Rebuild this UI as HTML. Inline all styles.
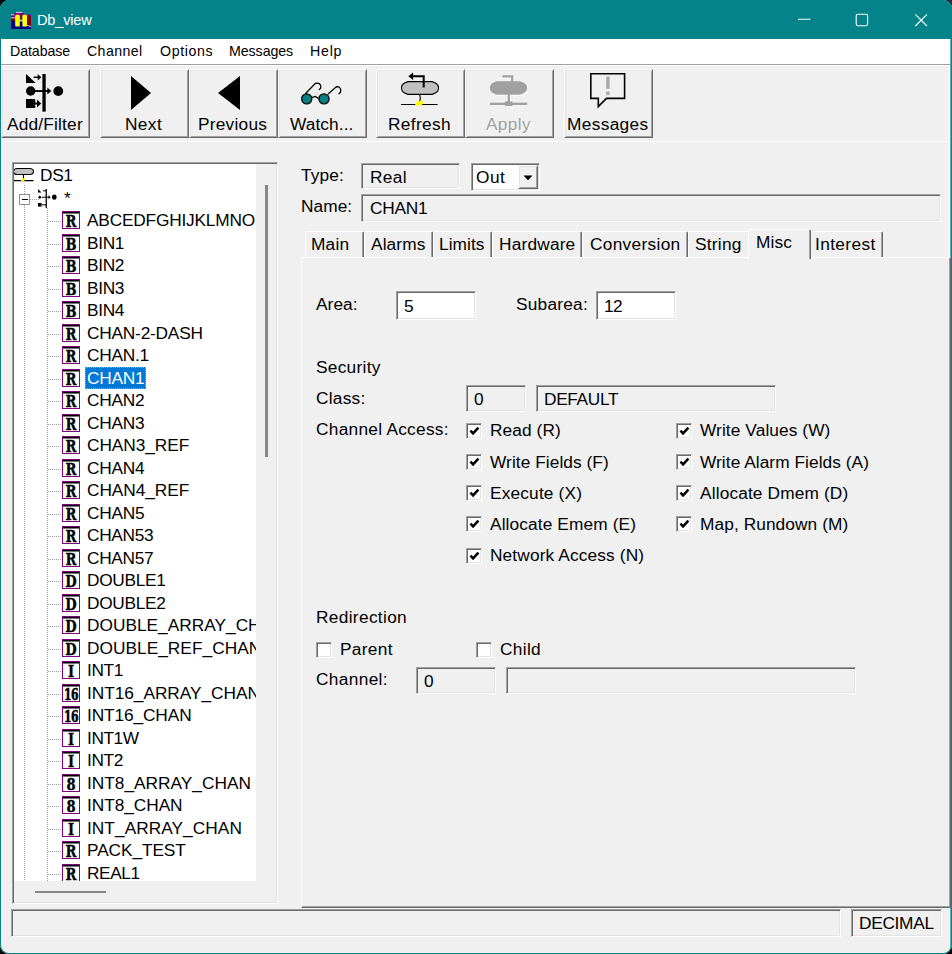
<!DOCTYPE html>
<html><head><meta charset="utf-8"><title>Db_view</title>
<style>
html,body{margin:0;padding:0;background:#000;}
body{width:952px;height:954px;overflow:hidden;position:relative;font-family:"Liberation Sans",sans-serif;}
#win{position:absolute;left:0;top:0;width:952px;height:954px;box-sizing:border-box;background:#f0f0f0;border-radius:9px;overflow:hidden;}
#frame{position:absolute;left:0;top:0;width:952px;height:954px;box-sizing:border-box;border:1px solid #04838a;border-top:none;border-radius:9px;pointer-events:none;}
#win div,#win svg,#win span,.abs{position:absolute;}
.t{white-space:pre;color:#000;}
.sunk{box-sizing:border-box;border:1px solid;border-color:#a0a0a0 #fff #fff #a0a0a0;box-shadow:inset 1px 1px 0 #696969,inset -1px -1px 0 #e3e3e3;}
.btn{box-sizing:border-box;border:1px solid;border-color:#fff #696969 #696969 #fff;box-shadow:inset 1px 1px 0 #e3e3e3,inset -1px -1px 0 #a0a0a0;background:#f0f0f0;}
.vdot{background:repeating-linear-gradient(to bottom,#a0a0a0 0 1px,transparent 1px 2px);}
.hdot{background:repeating-linear-gradient(to right,#a0a0a0 0 1px,transparent 1px 2px);}
.ticon{box-sizing:border-box;width:18px;height:18px;border:1px solid #800080;background:#fff;color:#000;box-shadow:inset 0 1px 0 #000,inset 0 2px 0 #777;overflow:hidden;}
#win .ticon b{position:absolute;display:block;left:-7px;width:30px;top:2px;height:16px;line-height:16px;text-align:center;-webkit-text-stroke:0.35px #000;font-family:"DejaVu Serif","Liberation Serif",serif;font-weight:bold;}
.tabpage{box-sizing:border-box;border:1px solid;border-color:#fff #696969 #696969 #fff;box-shadow:inset -1px -1px 0 #a0a0a0;}
.tab{box-sizing:border-box;border:1px solid;border-color:#fff #696969 transparent #fff;box-shadow:inset -1px 0 0 #a0a0a0;border-radius:2px 2px 0 0;border-bottom:none;}
.tab.sel{background:#f0f0f0;}
</style></head><body>
<div class="abs" style="right:0;top:0;width:12px;height:12px;background:#2a2a3c"></div>
<div id="win">
<div class="abs" style="left:0;top:0;width:952px;height:39px;background:#04838a"></div>
<svg class="abs" style="left:11px;top:9px" width="20" height="20" viewBox="0 0 20 20">
<rect x="0" y="0" width="20" height="20" fill="#008080"/>
<rect x="0" y="11.3" width="20" height="8.7" fill="#000080"/>
<rect x="0" y="8.7" width="5" height="3.4" fill="#800000"/><rect x="16.2" y="7.2" width="3.8" height="9.4" fill="#800000"/>
<path d="M16.2 16.4 L20 17.6" stroke="#fff" stroke-width="0.8"/>
<path d="M0 5.6 H3.2 L5 3.3 H11.4 L13.6 5.6 H20 V7.3 H16.2 V8.7 H0 Z" fill="#800080"/>
<path d="M5 3.4 H11.4 M0 5.8 H3 M0 8.9 H4.4" stroke="#fff" stroke-width="0.8"/>
<rect x="8.6" y="9.2" width="3" height="1.4" fill="#800000"/><rect x="8.6" y="10.8" width="3" height="1" fill="#fff"/><rect x="8.6" y="11.9" width="3" height="0.9" fill="#30b040"/>
<rect x="4.2" y="5.8" width="4.6" height="11.8" rx="1.2" fill="#ffff00"/><rect x="11.4" y="5.8" width="4.6" height="11.8" rx="1.2" fill="#ffff00"/>
</svg>
<span class="t" style="left:37.00px;top:12px;font-size:14.6px;line-height:16px;letter-spacing:-0.200px;color:#fff;">Db_view</span>
<svg class="abs" style="left:780px;top:0" width="172" height="39" viewBox="0 0 172 39" fill="none" stroke="#fff" stroke-width="1.1">
<path d="M18 19.3 H30.5"/>
<rect x="76.2" y="14.3" width="11.4" height="11.4" rx="1.6"/>
<path d="M135.3 14.3 L147 26 M147 14.3 L135.3 26"/>
</svg>
<div class="" style="left:1px;top:39px;width:950px;height:25px;background:#fff;"></div>
<div class="" style="left:1px;top:64px;width:950px;height:1px;background:#a0a0a0;"></div>
<div class="" style="left:1px;top:65px;width:950px;height:1px;background:#fff;"></div>
<span class="t" style="left:10.00px;top:43px;font-size:14.2px;line-height:16px;letter-spacing:-0.073px;color:#000;">Database</span>
<span class="t" style="left:87.00px;top:43px;font-size:14.2px;line-height:16px;letter-spacing:0.372px;color:#000;">Channel</span>
<span class="t" style="left:160.00px;top:43px;font-size:14.2px;line-height:16px;letter-spacing:0.609px;color:#000;">Options</span>
<span class="t" style="left:229.00px;top:43px;font-size:14.2px;line-height:16px;letter-spacing:-0.065px;color:#000;">Messages</span>
<span class="t" style="left:310.00px;top:43px;font-size:14.2px;line-height:16px;letter-spacing:0.749px;color:#000;">Help</span>
<div class="" style="left:1px;top:141px;width:950px;height:1px;background:#fff;"></div>
<div class="" style="left:1px;top:66px;width:1px;height:887px;background:#fff;"></div>
<div class="" style="left:948px;top:66px;width:2px;height:191px;background:#f8f8f8;"></div>
<div class="" style="left:950px;top:39px;width:1px;height:914px;background:#5fb0b4;"></div>
<div class="btn" style="left:1px;top:69px;width:89px;height:69px;"></div>
<svg class="abs" style="left:26px;top:74px;overflow:visible" width="38" height="37" viewBox="0 0 38 37"><g fill="#000" stroke="none"><path d="M0 0 L0 9 L9.7 9 Z"/><path d="M7.7 2.5 h4 v-2.6 l3.6 3.3 l-3.6 3.3 v-2.6 h-4 z"/>
<rect x="16.4" y="0" width="3.3" height="37.6"/><circle cx="4.7" cy="17" r="4.7"/><rect x="8" y="16.1" width="14" height="1.9"/><path d="M21.3 13.6 l4 3.4 l-4 3.4 z"/>
<circle cx="32.3" cy="17.1" r="4.9"/><rect x="0" y="25" width="9.2" height="9"/><path d="M9 28.6 h2 v-3.2 l4.2 4.1 l-4.2 4.1 v-3.2 h-2 z"/></g></svg>
<span class="t" style="left:7.00px;top:114px;font-size:17.3px;line-height:20px;letter-spacing:0.191px;color:#000;">Add/Filter</span>
<div class="btn" style="left:100px;top:69px;width:89px;height:69px;"></div>
<svg class="abs" style="left:131px;top:76px;overflow:visible" width="20" height="34" viewBox="0 0 20 34"><path d="M0 0 L20 17 L0 34 Z" fill="#000"/></svg>
<span class="t" style="left:125.00px;top:114px;font-size:17.3px;line-height:20px;letter-spacing:0.388px;color:#000;">Next</span>
<div class="btn" style="left:189px;top:69px;width:89px;height:69px;"></div>
<svg class="abs" style="left:218px;top:76px;overflow:visible" width="22" height="34" viewBox="0 0 22 34"><path d="M22 0 L0 17 L22 34 Z" fill="#000"/></svg>
<span class="t" style="left:198.00px;top:114px;font-size:17.3px;line-height:20px;letter-spacing:0.235px;color:#000;">Previous</span>
<div class="btn" style="left:278px;top:69px;width:89px;height:69px;"></div>
<svg class="abs" style="left:301px;top:82px;overflow:visible" width="41" height="24" viewBox="0 0 41 24"><g fill="none" stroke="#000" stroke-width="1.3" stroke-linecap="round"><path d="M4.8 11.2 L14.2 1.5 Q19.3 0.3 19.8 4.3 Q20 6.8 18.2 7.5"/><path d="M27.4 11.8 L35 5 Q39.3 3.8 39.8 8.3 Q39.9 10.8 38.1 11.7"/><path d="M10.8 15.6 L14.2 14.4 L17.6 16.4"/></g>
<circle cx="5.7" cy="16.9" r="5.1" fill="#008080" stroke="#000" stroke-width="1.2"/><circle cx="23" cy="16.9" r="5.1" fill="#008080" stroke="#000" stroke-width="1.2"/></svg>
<span class="t" style="left:290.00px;top:114px;font-size:17.3px;line-height:20px;letter-spacing:0.085px;color:#000;">Watch...</span>
<div class="btn" style="left:376px;top:69px;width:89px;height:69px;"></div>
<svg class="abs" style="left:401px;top:73px;overflow:visible" width="38" height="33" viewBox="0 0 38 33"><path d="M7 8.6 H31 Q37.6 10.5 37.6 15 Q37.6 19.5 31 21.4 H7 Q0.4 19.5 0.4 15 Q0.4 10.5 7 8.6 Z" fill="#c0c0c0" stroke="#000" stroke-width="1.1"/>
<path d="M22.7 14.4 V3.3 H11.5" fill="none" stroke="#000" stroke-width="2"/><path d="M7.3 3.3 l4.8 -3.7 v7.4 z" fill="#000"/>
<path d="M18.5 21.6 Q20.2 25 18.6 28.5" fill="none" stroke="#000" stroke-width="1.1"/><path d="M0 31.5 H36.5" stroke="#000" stroke-width="1.2"/><path d="M13.8 32.6 l2.2 -4.6 h6.8 l-2.2 4.6 z" fill="#ffff00"/></svg>
<span class="t" style="left:388.00px;top:114px;font-size:17.3px;line-height:20px;letter-spacing:0.346px;color:#000;">Refresh</span>
<div class="btn" style="left:465px;top:69px;width:89px;height:69px;"></div>
<svg class="abs" style="left:490px;top:75px;overflow:visible" width="38" height="32" viewBox="0 0 38 32"><g fill="#fff" stroke="#fff" transform="translate(1,1)"><path d="M6.5 6.3 H30 Q37.3 8.5 37.3 13 Q37.3 17.5 30 19.8 H6.5 Q-0.2 17.5 -0.2 13 Q-0.2 8.5 6.5 6.3 Z" stroke="none"/>
<path d="M12.4 1.3 H22.3 V7" fill="none" stroke-width="2.3"/><rect x="17.7" y="19.5" width="2.3" height="8" stroke="none"/><rect x="0" y="27.7" width="37.3" height="2.4" stroke="none"/><rect x="14.9" y="26.4" width="7.6" height="4.7" stroke="none"/></g><g fill="#a0a0a0" stroke="#a0a0a0"><path d="M6.5 6.3 H30 Q37.3 8.5 37.3 13 Q37.3 17.5 30 19.8 H6.5 Q-0.2 17.5 -0.2 13 Q-0.2 8.5 6.5 6.3 Z" stroke="none"/>
<path d="M12.4 1.3 H22.3 V7" fill="none" stroke-width="2.3"/><rect x="17.7" y="19.5" width="2.3" height="8" stroke="none"/><rect x="0" y="27.7" width="37.3" height="2.4" stroke="none"/><rect x="14.9" y="26.4" width="7.6" height="4.7" stroke="none"/></g></svg>
<span class="t" style="left:486.00px;top:114px;font-size:17.3px;line-height:20px;letter-spacing:0.345px;color:#a0a0a0;text-shadow:1px 1px 0 #fff;">Apply</span>
<div class="btn" style="left:564px;top:69px;width:89px;height:69px;"></div>
<svg class="abs" style="left:590px;top:73px;overflow:visible" width="36" height="35" viewBox="0 0 36 35"><path d="M0.8 0.8 H34.6 V25.4 H16.5 L8.3 33.5 V25.4 H0.8 Z" fill="none" stroke="#000" stroke-width="1.6"/>
<rect x="16.2" y="3.6" width="3.4" height="12.2" fill="#a8a8a8"/><rect x="16.2" y="18.6" width="3.4" height="3.5" fill="#a8a8a8"/></svg>
<span class="t" style="left:567.00px;top:114px;font-size:17.3px;line-height:20px;letter-spacing:0.339px;color:#000;">Messages</span>
<div class="sunk" style="left:12px;top:162px;width:266px;height:742px;background:#f0f0f0;"></div>
<div class="" style="left:14px;top:164px;width:242px;height:717px;background:#fff;"></div>
<div class="" style="left:265px;top:185px;width:2.5px;height:272px;background:#868686;"></div>
<div class="" style="left:35px;top:890.5px;width:70.5px;height:2.0px;background:#868686;"></div>
<div class="abs" style="left:14px;top:164px;width:242px;height:717px;overflow:hidden">
<div class="vdot" style="left:10px;top:21px;width:1px;height:696px;"></div>
<div class="vdot" style="left:33px;top:44px;width:1px;height:673px;"></div>
<div class="hdot" style="left:16px;top:35px;width:9px;height:1px;"></div>
<svg class="abs" style="left:-1px;top:3px;overflow:visible" width="22" height="16" viewBox="0 0 22 16">
<path d="M4.5 1.5 H16.5 Q20.5 1.5 20.5 4.5 Q20.5 7.5 16.5 7.5 H4.5 Q0.5 7.5 0.5 4.5 Q0.5 1.5 4.5 1.5 Z" fill="#c0c0c0" stroke="#000" stroke-width="1.1"/>
<path d="M10.5 8 V13" stroke="#000" stroke-width="1.1"/><path d="M0 13.6 H20.5" stroke="#000" stroke-width="1.2"/><path d="M7.5 14.3 l1.5 -3 h3.5 l-1.5 3 z" fill="#ffff00"/></svg>
<span class="t" style="left:26.00px;top:1px;font-size:17.3px;line-height:20px;letter-spacing:-0.343px;">DS1</span>
<div class="" style="left:5px;top:30px;width:11px;height:11px;background:#fff;border:1px solid #919191;box-sizing:border-box;"></div>
<div class="" style="left:7.5px;top:35px;width:6.0px;height:1.1999999999999886px;background:#000;"></div>
<svg class="abs" style="left:24px;top:25px;overflow:visible" width="20" height="20" viewBox="0 0 20 20" fill="#000">
<path d="M0 0 L0 3.5 L3.5 3.5 Z"/><rect x="5" y="1.3" width="3" height="1"/>
<rect x="7.6" y="0" width="1.3" height="19"/>
<path d="M0 8.2 l1.8 -1.8 l1.8 1.8 l-1.8 1.8 z"/><rect x="4" y="7.7" width="8" height="1"/><path d="M10.5 6.3 l2.2 1.9 l-2.2 1.9 z"/>
<ellipse cx="16.3" cy="8.2" rx="2.3" ry="2.6"/>
<rect x="0" y="14" width="3.6" height="3.6"/><rect x="4" y="15.3" width="4" height="1"/></svg>
<span class="t" style="left:50.00px;top:24px;font-size:17.3px;line-height:20px;letter-spacing:0.018px;">*</span>
<div class="hdot" style="left:34px;top:57px;width:13px;height:1px;"></div>
<div class="ticon" style="left:48px;top:47px;"><b style="font-size:16px;transform:scaleX(0.82);">R</b></div>
<span class="t" style="left:73.00px;top:46px;font-size:17.3px;line-height:20px;letter-spacing:-0.194px;">ABCEDFGHIJKLMNO</span>
<div class="hdot" style="left:34px;top:80px;width:13px;height:1px;"></div>
<div class="ticon" style="left:48px;top:70px;"><b style="font-size:16px;transform:scaleX(0.82);">B</b></div>
<span class="t" style="left:73.00px;top:69px;font-size:17.3px;line-height:20px;letter-spacing:-0.334px;">BIN1</span>
<div class="hdot" style="left:34px;top:102px;width:13px;height:1px;"></div>
<div class="ticon" style="left:48px;top:92px;"><b style="font-size:16px;transform:scaleX(0.82);">B</b></div>
<span class="t" style="left:73.00px;top:91px;font-size:17.3px;line-height:20px;letter-spacing:-0.334px;">BIN2</span>
<div class="hdot" style="left:34px;top:125px;width:13px;height:1px;"></div>
<div class="ticon" style="left:48px;top:115px;"><b style="font-size:16px;transform:scaleX(0.82);">B</b></div>
<span class="t" style="left:73.00px;top:114px;font-size:17.3px;line-height:20px;letter-spacing:-0.334px;">BIN3</span>
<div class="hdot" style="left:34px;top:147px;width:13px;height:1px;"></div>
<div class="ticon" style="left:48px;top:137px;"><b style="font-size:16px;transform:scaleX(0.82);">B</b></div>
<span class="t" style="left:73.00px;top:136px;font-size:17.3px;line-height:20px;letter-spacing:-0.334px;">BIN4</span>
<div class="hdot" style="left:34px;top:170px;width:13px;height:1px;"></div>
<div class="ticon" style="left:48px;top:160px;"><b style="font-size:16px;transform:scaleX(0.82);">R</b></div>
<span class="t" style="left:73.00px;top:159px;font-size:17.3px;line-height:20px;letter-spacing:-0.214px;">CHAN-2-DASH</span>
<div class="hdot" style="left:34px;top:192px;width:13px;height:1px;"></div>
<div class="ticon" style="left:48px;top:182px;"><b style="font-size:16px;transform:scaleX(0.82);">R</b></div>
<span class="t" style="left:73.00px;top:181px;font-size:17.3px;line-height:20px;letter-spacing:-0.262px;">CHAN.1</span>
<div class="hdot" style="left:34px;top:215px;width:13px;height:1px;"></div>
<div class="ticon" style="left:48px;top:205px;"><b style="font-size:16px;transform:scaleX(0.82);">R</b></div>
<div class="" style="left:71px;top:203px;width:61px;height:22px;background:#0078d7;outline:1px dotted #e8a040;outline-offset:-1px;"></div>
<span class="t" style="left:73.00px;top:204px;font-size:17.3px;line-height:20px;letter-spacing:-0.253px;color:#fff;">CHAN1</span>
<div class="hdot" style="left:34px;top:237px;width:13px;height:1px;"></div>
<div class="ticon" style="left:48px;top:227px;"><b style="font-size:16px;transform:scaleX(0.82);">R</b></div>
<span class="t" style="left:73.00px;top:226px;font-size:17.3px;line-height:20px;letter-spacing:-0.253px;">CHAN2</span>
<div class="hdot" style="left:34px;top:260px;width:13px;height:1px;"></div>
<div class="ticon" style="left:48px;top:250px;"><b style="font-size:16px;transform:scaleX(0.82);">R</b></div>
<span class="t" style="left:73.00px;top:249px;font-size:17.3px;line-height:20px;letter-spacing:-0.253px;">CHAN3</span>
<div class="hdot" style="left:34px;top:282px;width:13px;height:1px;"></div>
<div class="ticon" style="left:48px;top:272px;"><b style="font-size:16px;transform:scaleX(0.82);">R</b></div>
<span class="t" style="left:73.00px;top:271px;font-size:17.3px;line-height:20px;letter-spacing:-0.054px;">CHAN3_REF</span>
<div class="hdot" style="left:34px;top:305px;width:13px;height:1px;"></div>
<div class="ticon" style="left:48px;top:295px;"><b style="font-size:16px;transform:scaleX(0.82);">R</b></div>
<span class="t" style="left:73.00px;top:294px;font-size:17.3px;line-height:20px;letter-spacing:-0.253px;">CHAN4</span>
<div class="hdot" style="left:34px;top:327px;width:13px;height:1px;"></div>
<div class="ticon" style="left:48px;top:317px;"><b style="font-size:16px;transform:scaleX(0.82);">R</b></div>
<span class="t" style="left:73.00px;top:316px;font-size:17.3px;line-height:20px;letter-spacing:-0.054px;">CHAN4_REF</span>
<div class="hdot" style="left:34px;top:350px;width:13px;height:1px;"></div>
<div class="ticon" style="left:48px;top:340px;"><b style="font-size:16px;transform:scaleX(0.82);">R</b></div>
<span class="t" style="left:73.00px;top:339px;font-size:17.3px;line-height:20px;letter-spacing:-0.253px;">CHAN5</span>
<div class="hdot" style="left:34px;top:372px;width:13px;height:1px;"></div>
<div class="ticon" style="left:48px;top:362px;"><b style="font-size:16px;transform:scaleX(0.82);">R</b></div>
<span class="t" style="left:73.00px;top:361px;font-size:17.3px;line-height:20px;letter-spacing:-0.315px;">CHAN53</span>
<div class="hdot" style="left:34px;top:395px;width:13px;height:1px;"></div>
<div class="ticon" style="left:48px;top:385px;"><b style="font-size:16px;transform:scaleX(0.82);">R</b></div>
<span class="t" style="left:73.00px;top:384px;font-size:17.3px;line-height:20px;letter-spacing:-0.315px;">CHAN57</span>
<div class="hdot" style="left:34px;top:417px;width:13px;height:1px;"></div>
<div class="ticon" style="left:48px;top:407px;"><b style="font-size:16px;transform:scaleX(0.82);">D</b></div>
<span class="t" style="left:73.00px;top:406px;font-size:17.3px;line-height:20px;letter-spacing:-0.288px;">DOUBLE1</span>
<div class="hdot" style="left:34px;top:440px;width:13px;height:1px;"></div>
<div class="ticon" style="left:48px;top:430px;"><b style="font-size:16px;transform:scaleX(0.82);">D</b></div>
<span class="t" style="left:73.00px;top:429px;font-size:17.3px;line-height:20px;letter-spacing:-0.288px;">DOUBLE2</span>
<div class="hdot" style="left:34px;top:462px;width:13px;height:1px;"></div>
<div class="ticon" style="left:48px;top:452px;"><b style="font-size:16px;transform:scaleX(0.82);">D</b></div>
<span class="t" style="left:73.00px;top:451px;font-size:17.3px;line-height:20px;letter-spacing:0.007px;">DOUBLE_ARRAY_CHAN</span>
<div class="hdot" style="left:34px;top:485px;width:13px;height:1px;"></div>
<div class="ticon" style="left:48px;top:475px;"><b style="font-size:16px;transform:scaleX(0.82);">D</b></div>
<span class="t" style="left:73.00px;top:474px;font-size:17.3px;line-height:20px;letter-spacing:0.025px;">DOUBLE_REF_CHAN</span>
<div class="hdot" style="left:34px;top:507px;width:13px;height:1px;"></div>
<div class="ticon" style="left:48px;top:497px;"><b style="font-size:16px;transform:scaleX(0.82);">I</b></div>
<span class="t" style="left:73.00px;top:496px;font-size:17.3px;line-height:20px;letter-spacing:-0.372px;">INT1</span>
<div class="hdot" style="left:34px;top:530px;width:13px;height:1px;"></div>
<div class="ticon" style="left:48px;top:520px;"><b style="font-size:16px;transform:scaleX(0.68);letter-spacing:-0.8px;-webkit-text-stroke:0.6px #000;">16</b></div>
<span class="t" style="left:73.00px;top:519px;font-size:17.3px;line-height:20px;letter-spacing:-0.038px;">INT16_ARRAY_CHAN</span>
<div class="hdot" style="left:34px;top:552px;width:13px;height:1px;"></div>
<div class="ticon" style="left:48px;top:542px;"><b style="font-size:16px;transform:scaleX(0.68);letter-spacing:-0.8px;-webkit-text-stroke:0.6px #000;">16</b></div>
<span class="t" style="left:73.00px;top:541px;font-size:17.3px;line-height:20px;letter-spacing:-0.113px;">INT16_CHAN</span>
<div class="hdot" style="left:34px;top:575px;width:13px;height:1px;"></div>
<div class="ticon" style="left:48px;top:565px;"><b style="font-size:16px;transform:scaleX(0.82);">I</b></div>
<span class="t" style="left:73.00px;top:564px;font-size:17.3px;line-height:20px;letter-spacing:-0.414px;">INT1W</span>
<div class="hdot" style="left:34px;top:597px;width:13px;height:1px;"></div>
<div class="ticon" style="left:48px;top:587px;"><b style="font-size:16px;transform:scaleX(0.82);">I</b></div>
<span class="t" style="left:73.00px;top:586px;font-size:17.3px;line-height:20px;letter-spacing:-0.372px;">INT2</span>
<div class="hdot" style="left:34px;top:620px;width:13px;height:1px;"></div>
<div class="ticon" style="left:48px;top:610px;"><b style="font-size:16px;transform:scaleX(0.82);">8</b></div>
<span class="t" style="left:73.00px;top:609px;font-size:17.3px;line-height:20px;letter-spacing:0.001px;">INT8_ARRAY_CHAN</span>
<div class="hdot" style="left:34px;top:642px;width:13px;height:1px;"></div>
<div class="ticon" style="left:48px;top:632px;"><b style="font-size:16px;transform:scaleX(0.82);">8</b></div>
<span class="t" style="left:73.00px;top:631px;font-size:17.3px;line-height:20px;letter-spacing:-0.056px;">INT8_CHAN</span>
<div class="hdot" style="left:34px;top:665px;width:13px;height:1px;"></div>
<div class="ticon" style="left:48px;top:655px;"><b style="font-size:16px;transform:scaleX(0.82);">I</b></div>
<span class="t" style="left:73.00px;top:654px;font-size:17.3px;line-height:20px;letter-spacing:0.046px;">INT_ARRAY_CHAN</span>
<div class="hdot" style="left:34px;top:687px;width:13px;height:1px;"></div>
<div class="ticon" style="left:48px;top:677px;"><b style="font-size:16px;transform:scaleX(0.82);">R</b></div>
<span class="t" style="left:73.00px;top:676px;font-size:17.3px;line-height:20px;letter-spacing:-0.091px;">PACK_TEST</span>
<div class="hdot" style="left:34px;top:710px;width:13px;height:1px;"></div>
<div class="ticon" style="left:48px;top:700px;"><b style="font-size:16px;transform:scaleX(0.82);">R</b></div>
<span class="t" style="left:73.00px;top:699px;font-size:17.3px;line-height:20px;letter-spacing:-0.388px;">REAL1</span>
</div>
<span class="t" style="left:301.00px;top:165px;font-size:17.3px;line-height:20px;letter-spacing:0.122px;">Type:</span>
<div class="sunk" style="left:361px;top:163px;width:99px;height:26px;background:#f0f0f0;"></div>
<span class="t" style="left:370.00px;top:167px;font-size:17.3px;line-height:20px;letter-spacing:0.386px;">Real</span>
<div class="sunk" style="left:471px;top:163px;width:69px;height:28px;background:#fff;"></div>
<span class="t" style="left:476.00px;top:167px;font-size:17.3px;line-height:20px;letter-spacing:0.455px;">Out</span>
<div class="btn" style="left:518px;top:165px;width:20px;height:24px;"></div>
<svg class="abs" style="left:523px;top:175px" width="10" height="6" viewBox="0 0 10 6"><path d="M0.5 0.5 H9.5 L5 5.3 Z" fill="#000"/></svg>
<span class="t" style="left:301.00px;top:196px;font-size:17.3px;line-height:20px;letter-spacing:0.047px;">Name:</span>
<div class="sunk" style="left:361px;top:194px;width:580px;height:28px;background:#f0f0f0;"></div>
<span class="t" style="left:370.00px;top:198px;font-size:17.3px;line-height:20px;letter-spacing:-0.253px;">CHAN1</span>
<div class="tabpage" style="left:301px;top:257px;width:650px;height:651px;"></div>
<div class="tab" style="left:305px;top:231px;width:59px;height:26px;"></div>
<span class="t" style="left:311.00px;top:234px;font-size:17.3px;line-height:20px;letter-spacing:0.188px;">Main</span>
<div class="tab" style="left:364px;top:231px;width:69px;height:26px;"></div>
<span class="t" style="left:371.00px;top:234px;font-size:17.3px;line-height:20px;letter-spacing:0.123px;">Alarms</span>
<div class="tab" style="left:433px;top:231px;width:59px;height:26px;"></div>
<span class="t" style="left:439.00px;top:234px;font-size:17.3px;line-height:20px;letter-spacing:0.064px;">Limits</span>
<div class="tab" style="left:492px;top:231px;width:90px;height:26px;"></div>
<span class="t" style="left:499.00px;top:234px;font-size:17.3px;line-height:20px;letter-spacing:0.188px;">Hardware</span>
<div class="tab" style="left:582px;top:231px;width:106px;height:26px;"></div>
<span class="t" style="left:590.00px;top:234px;font-size:17.3px;line-height:20px;letter-spacing:0.306px;">Conversion</span>
<div class="tab" style="left:688px;top:231px;width:62px;height:26px;"></div>
<span class="t" style="left:695.00px;top:234px;font-size:17.3px;line-height:20px;letter-spacing:0.249px;">String</span>
<div class="tab" style="left:810px;top:231px;width:73px;height:26px;"></div>
<span class="t" style="left:815.00px;top:234px;font-size:17.3px;line-height:20px;letter-spacing:0.382px;">Interest</span>
<div class="tab sel" style="left:748px;top:229px;width:63px;height:30px;"></div>
<span class="t" style="left:756.00px;top:232px;font-size:17.3px;line-height:20px;letter-spacing:0.111px;">Misc</span>
<span class="t" style="left:316.00px;top:294px;font-size:17.3px;line-height:20px;letter-spacing:0.055px;">Area:</span>
<div class="sunk" style="left:396px;top:291px;width:80px;height:29px;background:#fff;"></div>
<span class="t" style="left:404.00px;top:296px;font-size:17.3px;line-height:20px;letter-spacing:-0.621px;">5</span>
<span class="t" style="left:516.00px;top:294px;font-size:17.3px;line-height:20px;letter-spacing:0.223px;">Subarea:</span>
<div class="sunk" style="left:596px;top:291px;width:80px;height:29px;background:#fff;"></div>
<span class="t" style="left:604.00px;top:296px;font-size:17.3px;line-height:20px;letter-spacing:-0.621px;">12</span>
<span class="t" style="left:316.00px;top:357px;font-size:17.3px;line-height:20px;letter-spacing:0.274px;">Security</span>
<span class="t" style="left:316.00px;top:388px;font-size:17.3px;line-height:20px;letter-spacing:0.239px;">Class:</span>
<div class="sunk" style="left:466px;top:385px;width:60px;height:27px;background:#f0f0f0;"></div>
<span class="t" style="left:474.00px;top:389px;font-size:17.3px;line-height:20px;letter-spacing:-0.621px;">0</span>
<div class="sunk" style="left:536px;top:385px;width:240px;height:27px;background:#f0f0f0;"></div>
<span class="t" style="left:544.00px;top:389px;font-size:17.3px;line-height:20px;letter-spacing:-0.332px;">DEFAULT</span>
<span class="t" style="left:316.00px;top:419px;font-size:17.3px;line-height:20px;letter-spacing:0.270px;">Channel Access:</span>
<div class="sunk" style="left:466px;top:423px;width:16px;height:16px;background:#fff;"></div>
<svg class="abs" style="left:469px;top:426px" width="11" height="10" viewBox="0 0 11 10"><path d="M1.4 4.6 L4.1 7.4 L9.4 1.6" fill="none" stroke="#000" stroke-width="2.5"/></svg>
<span class="t" style="left:490.00px;top:420px;font-size:17.3px;line-height:20px;letter-spacing:0.087px;">Read (R)</span>
<div class="sunk" style="left:466px;top:454px;width:16px;height:16px;background:#fff;"></div>
<svg class="abs" style="left:469px;top:457px" width="11" height="10" viewBox="0 0 11 10"><path d="M1.4 4.6 L4.1 7.4 L9.4 1.6" fill="none" stroke="#000" stroke-width="2.5"/></svg>
<span class="t" style="left:490.00px;top:452px;font-size:17.3px;line-height:20px;letter-spacing:0.065px;">Write Fields (F)</span>
<div class="sunk" style="left:466px;top:485px;width:16px;height:16px;background:#fff;"></div>
<svg class="abs" style="left:469px;top:488px" width="11" height="10" viewBox="0 0 11 10"><path d="M1.4 4.6 L4.1 7.4 L9.4 1.6" fill="none" stroke="#000" stroke-width="2.5"/></svg>
<span class="t" style="left:490.00px;top:483px;font-size:17.3px;line-height:20px;letter-spacing:0.170px;">Execute (X)</span>
<div class="sunk" style="left:466px;top:516px;width:16px;height:16px;background:#fff;"></div>
<svg class="abs" style="left:469px;top:519px" width="11" height="10" viewBox="0 0 11 10"><path d="M1.4 4.6 L4.1 7.4 L9.4 1.6" fill="none" stroke="#000" stroke-width="2.5"/></svg>
<span class="t" style="left:490.00px;top:514px;font-size:17.3px;line-height:20px;letter-spacing:0.120px;">Allocate Emem (E)</span>
<div class="sunk" style="left:466px;top:548px;width:16px;height:16px;background:#fff;"></div>
<svg class="abs" style="left:469px;top:551px" width="11" height="10" viewBox="0 0 11 10"><path d="M1.4 4.6 L4.1 7.4 L9.4 1.6" fill="none" stroke="#000" stroke-width="2.5"/></svg>
<span class="t" style="left:490.00px;top:545px;font-size:17.3px;line-height:20px;letter-spacing:0.134px;">Network Access (N)</span>
<div class="sunk" style="left:676px;top:423px;width:16px;height:16px;background:#fff;"></div>
<svg class="abs" style="left:679px;top:426px" width="11" height="10" viewBox="0 0 11 10"><path d="M1.4 4.6 L4.1 7.4 L9.4 1.6" fill="none" stroke="#000" stroke-width="2.5"/></svg>
<span class="t" style="left:700.00px;top:420px;font-size:17.3px;line-height:20px;letter-spacing:0.092px;">Write Values (W)</span>
<div class="sunk" style="left:676px;top:454px;width:16px;height:16px;background:#fff;"></div>
<svg class="abs" style="left:679px;top:457px" width="11" height="10" viewBox="0 0 11 10"><path d="M1.4 4.6 L4.1 7.4 L9.4 1.6" fill="none" stroke="#000" stroke-width="2.5"/></svg>
<span class="t" style="left:700.00px;top:452px;font-size:17.3px;line-height:20px;letter-spacing:0.058px;">Write Alarm Fields (A)</span>
<div class="sunk" style="left:676px;top:485px;width:16px;height:16px;background:#fff;"></div>
<svg class="abs" style="left:679px;top:488px" width="11" height="10" viewBox="0 0 11 10"><path d="M1.4 4.6 L4.1 7.4 L9.4 1.6" fill="none" stroke="#000" stroke-width="2.5"/></svg>
<span class="t" style="left:700.00px;top:483px;font-size:17.3px;line-height:20px;letter-spacing:0.140px;">Allocate Dmem (D)</span>
<div class="sunk" style="left:676px;top:516px;width:16px;height:16px;background:#fff;"></div>
<svg class="abs" style="left:679px;top:519px" width="11" height="10" viewBox="0 0 11 10"><path d="M1.4 4.6 L4.1 7.4 L9.4 1.6" fill="none" stroke="#000" stroke-width="2.5"/></svg>
<span class="t" style="left:700.00px;top:514px;font-size:17.3px;line-height:20px;letter-spacing:0.087px;">Map, Rundown (M)</span>
<span class="t" style="left:316.00px;top:607px;font-size:17.3px;line-height:20px;letter-spacing:0.329px;">Redirection</span>
<div class="sunk" style="left:316px;top:642px;width:16px;height:16px;background:#fff;"></div>
<span class="t" style="left:340.00px;top:639px;font-size:17.3px;line-height:20px;letter-spacing:0.317px;">Parent</span>
<div class="sunk" style="left:476px;top:642px;width:16px;height:16px;background:#fff;"></div>
<span class="t" style="left:500.00px;top:639px;font-size:17.3px;line-height:20px;letter-spacing:0.328px;">Child</span>
<span class="t" style="left:316.00px;top:669px;font-size:17.3px;line-height:20px;letter-spacing:0.344px;">Channel:</span>
<div class="sunk" style="left:416px;top:667px;width:80px;height:27px;background:#f0f0f0;"></div>
<span class="t" style="left:424.00px;top:671px;font-size:17.3px;line-height:20px;letter-spacing:-0.621px;">0</span>
<div class="sunk" style="left:506px;top:667px;width:350px;height:27px;background:#f0f0f0;"></div>
<div class="sunk" style="left:11px;top:909px;width:830px;height:28px;background:#f0f0f0;"></div>
<div class="sunk" style="left:851px;top:909px;width:91px;height:28px;background:#f0f0f0;"></div>
<span class="t" style="left:859.00px;top:913px;font-size:17.3px;line-height:20px;letter-spacing:-0.299px;">DECIMAL</span>
</div>
<div id="frame"></div>
</body></html>
